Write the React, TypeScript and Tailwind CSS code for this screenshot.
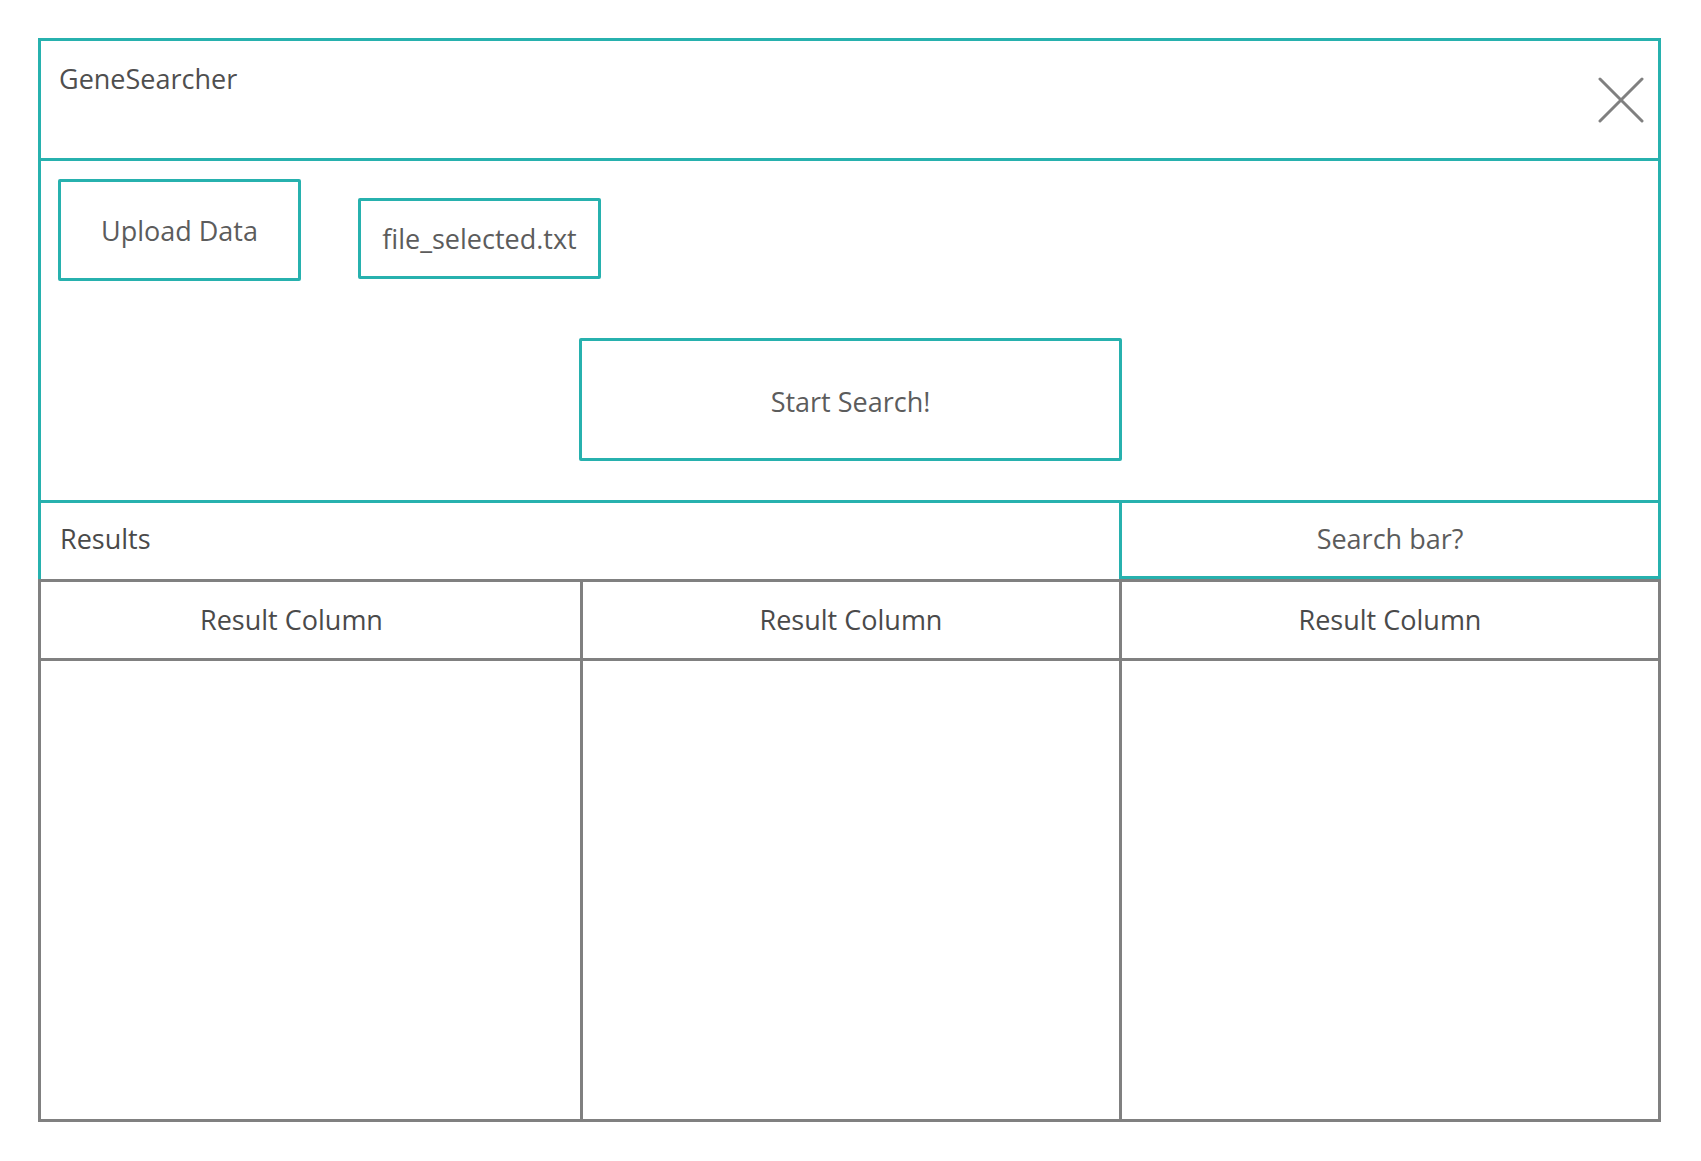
const TEAL = "border-[#27b1ae]";

function CloseIcon() {
  return (
    <svg width="46" height="46" viewBox="0 0 46 46" className="mr-[14px]">
      <path
        d="M2 2 L44 44 M44 2 L2 44"
        stroke="#808080"
        strokeWidth="3"
        strokeLinecap="round"
      />
    </svg>
  );
}

export default function App() {
  const columns = ["Result Column", "Result Column", "Result Column"];

  return (
    <div
      className="min-h-screen bg-white pl-[38px] pt-[38px] text-[#555]"
      style={{ fontFamily: '"Open Sans", "Noto Sans", sans-serif' }}
    >
      <div className="w-[1623px]">
        {/* top panel */}
        <div className={`border-[3px] border-b-0 ${TEAL}`}>
          <div
            className={`flex h-[120px] items-center justify-between border-b-[3px] ${TEAL}`}
          >
            <h1 className="self-start pl-[18px] pt-[20px] text-[27px] leading-[36px] text-[#4f4f4f]">
              GeneSearcher
            </h1>
            <CloseIcon />
          </div>

          <div className={`h-[342px] border-b-[3px] ${TEAL} pl-[17px] pt-[18px]`}>
            <div className="flex items-start">
              <button
                className={`flex h-[102px] w-[243px] items-center justify-center rounded-[2px] border-[3px] ${TEAL} pt-[2px] text-[27px] text-[#5c5c5c]`}
              >
                Upload Data
              </button>
              <div
                className={`ml-[57px] mt-[19px] flex h-[81px] w-[243px] items-center justify-center rounded-[2px] border-[3px] ${TEAL} pt-[2px] text-[27px] text-[#5c5c5c]`}
              >
                file_selected.txt
              </div>
            </div>
            <button
              className={`ml-[521px] mt-[57px] flex h-[123px] w-[543px] items-center justify-center rounded-[2px] border-[3px] ${TEAL} pt-[5px] text-[27px] text-[#5c5c5c]`}
            >
              Start Search!
            </button>
          </div>

          <div className="grid h-[76px] grid-cols-3">
            <div className="col-span-2 flex items-center pb-[3px] pl-[19px] text-[27px] text-[#4a4a4a]">
              Results
            </div>
            <div
              className={`flex items-center justify-center border-b-[3px] border-l-[3px] ${TEAL} text-[27px] text-[#5c5c5c]`}
            >
              Search bar?
            </div>
          </div>
        </div>

        {/* results table */}
        <div className="grid h-[543px] grid-cols-3 border-[3px] border-[#808080]">
          {columns.map((label, i) => (
            <div
              key={i}
              className={`flex flex-col ${i > 0 ? "border-l-[3px] border-[#808080]" : ""}`}
            >
              <div
                className={`flex h-[79px] items-center justify-center border-b-[3px] border-[#808080] text-[27px] text-[#4a4a4a] ${
                  i === 0 ? "pr-[38px]" : ""
                }`}
              >
                {label}
              </div>
              <div className="flex-1" />
            </div>
          ))}
        </div>
      </div>
    </div>
  );
}
